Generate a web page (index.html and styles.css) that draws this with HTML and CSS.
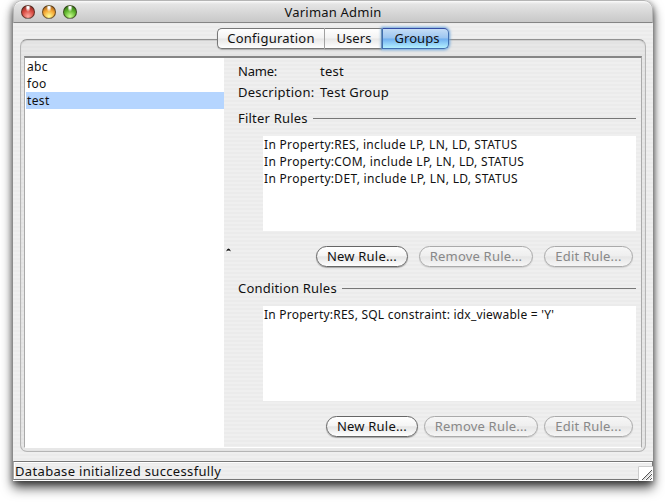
FILE: index.html
```html
<!DOCTYPE html>
<html lang="en">
<head>
<meta charset="utf-8">
<title>Variman Admin</title>
<link rel="stylesheet" href="styles.css">
</head>
<body>
<main class="window">
  <header class="titlebar">
    <div class="lights"><i class="light red"></i><i class="light yellow"></i><i class="light green"></i></div>
    <h1 class="title">Variman Admin</h1>
  </header>
  <section class="content">
    <nav class="tabs">
      <button class="tab tab-config">Configuration</button>
      <button class="tab tab-users">Users</button>
      <button class="tab tab-groups active">Groups</button>
    </nav>
    <div class="panel">
      <div class="split">
        <ul class="groups">
          <li>abc</li>
          <li>foo</li>
          <li class="selected">test</li>
        </ul>
        <div class="divider"><svg width="6" height="5" viewBox="0 0 6 5"><path d="M0 3.5 Q2.5 -2.5 5 3.5 Q2.5 1.5 0 3.5Z" fill="#111"/><path d="M1 4 Q2.5 2 4 4Z" fill="#fff"/></svg></div>
        <div class="details">
          <div class="field name"><span class="label">Name:</span><span class="value">test</span></div>
          <div class="field desc"><span class="label">Description:</span><span class="value">Test Group</span></div>
          <div class="heading filter"><span>Filter Rules</span><hr></div>
          <ul class="rules filters">
            <li>In Property:RES, include LP, LN, LD, STATUS</li>
            <li>In Property:COM, include LP, LN, LD, STATUS</li>
            <li>In Property:DET, include LP, LN, LD, STATUS</li>
          </ul>
          <div class="buttons wide">
            <button class="btn new">New Rule...</button>
            <button class="btn remove" disabled>Remove Rule...</button>
            <button class="btn edit" disabled>Edit Rule...</button>
          </div>
          <div class="heading condition"><span>Condition Rules</span><hr></div>
          <ul class="rules">
            <li>In Property:RES, SQL constraint: idx_viewable = 'Y'</li>
          </ul>
          <div class="buttons">
            <button class="btn new">New Rule...</button>
            <button class="btn remove" disabled>Remove Rule...</button>
            <button class="btn edit" disabled>Edit Rule...</button>
          </div>
        </div>
      </div>
    </div>
  </section>
  <footer class="status">
    <span class="status-text">Database initialized successfully</span>
    <svg class="grip" width="15" height="15" viewBox="0 0 15 15"><path d="M0 0H15V15H0Z" fill="#fff"/><path d="M.5 15V.5H15" fill="none" stroke="#ccc"/><path d="M4 14L14 4M8 14L14 8M12 14L14 12" stroke="#555" fill="none"/><path d="M5.5 14L14 5.5M9.5 14L14 9.5" stroke="#bbb" fill="none"/></svg>
  </footer>
</main>
</body>
</html>
```
FILE: styles.css
```css
* { box-sizing: border-box; }
body {
  margin: 0;
  height: 502px;
  overflow: hidden;
  background: #fff;
  color: #111;
  font: 13px/17px "Noto Sans", "Open Sans", sans-serif;
  letter-spacing: .25px;
}
ul { list-style: none; margin: 0; padding: 0; }
button { font: inherit; letter-spacing: inherit; color: inherit; padding: 0; white-space: nowrap; }
span, li { white-space: nowrap; }
.window {
  width: 640px;
  height: 481px;
  margin-left: 13px;
  display: flex;
  flex-direction: column;
  border-radius: 9px 9px 0 0;
  background: repeating-linear-gradient(#efefef 0 2px, #ebebeb 2px 4px);
  box-shadow: 0 7px 12px rgba(0,0,0,.65), 0 2px 6px rgba(0,0,0,.5);
}
.titlebar {
  position: relative;
  height: 23px;
  flex: none;
  border: 1px solid #b5b5b5;
  border-bottom-color: #858585;
  border-radius: 9px 9px 0 0;
  background: linear-gradient(#fafafa, #e4e4e4 15%, #c8c8c8);
  box-shadow: inset 0 1px #f8f8f8;
}
.lights { display: flex; gap: 7px; padding: 4px 0 0 7px; }
.light {
  width: 14px;
  height: 14px;
  border-radius: 50%;
  border: 1px solid rgba(45,35,25,.65);
}
.red { background: radial-gradient(ellipse at 50% 8%, #fff 0 10%, transparent 32%), radial-gradient(circle at 50% 85%, #ffaaa1, #d84b42 50%, #782019); }
.yellow { background: radial-gradient(ellipse at 50% 8%, #fff 0 10%, transparent 32%), radial-gradient(circle at 50% 85%, #ffff96, #f5a735 50%, #8a4a10); }
.green { background: radial-gradient(ellipse at 50% 8%, #fff 0 10%, transparent 32%), radial-gradient(circle at 50% 85%, #c8ff8e, #60b52d 50%, #225b0b); }
.title {
  position: absolute;
  inset: 3px 0 auto;
  margin: 0;
  font-size: 13px;
  font-weight: 400;
  line-height: 17px;
  text-align: center;
  letter-spacing: .2px;
}
.content { flex: 1; padding: 5px 7px 9px; display: flex; flex-direction: column; }
.tabs { display: flex; height: 21px; margin-left: 197px; position: relative; z-index: 1; }
.tab {
  border: 1px solid #777;
  border-left-width: 0;
  background: linear-gradient(#fff, #f3f3f3 48%, #e7e7e7 52%, #fff);
  box-shadow: 0 1px 1px rgba(0,0,0,.25);
  line-height: 19px;
}
.tab-config { width: 108px; border-left-width: 1px; border-right-color: #aaa; border-radius: 5px 0 0 5px; }
.tab-users { width: 57px; padding-left: 2px; letter-spacing: .1px; }
.tab-groups { width: 67px; padding-left: 3px; border-radius: 0 5px 5px 0; letter-spacing: .05px; }
.active {
  border: 1px solid #416fb0;
  border-top-color: #334ca5;
  background: linear-gradient(#c4ddf6, #9bc5f0 48%, #70aff0 52%, #b4f1ff);
  box-shadow: 0 0 3px 1px #69a4dc;
}
.panel {
  width: 626px;
  height: 413px;
  margin-top: -10px;
  padding: 16px 3px 3px;
  border: 1px solid #b5b5b5;
  border-top-color: #929292;
  border-radius: 7px;
  background: repeating-linear-gradient(#e7e7e7 0 2px, #e3e3e3 2px 4px);
  box-shadow: inset 0 1px 1px #ccc;
}
.split {
  height: 392px;
  display: flex;
  border: solid #aaa;
  border-width: 2px 1px 1px;
  border-top-color: #858585;
  border-bottom-color: #fff;
  background: repeating-linear-gradient(#efefef 0 2px, #ebebeb 2px 4px);
}
.groups { width: 199px; height: 389px; padding-left: 1px; background: #fff; font-size: 12px; letter-spacing: .35px; }
.groups li { height: 17px; padding-left: 1px; }
.groups .selected { background: #b5d5ff; }
.divider { width: 14px; padding: 190px 0 0 2px; }
.divider svg { display: block; }
.details { width: 398px; padding-top: 5px; }
.field { display: flex; height: 17px; }
.label { width: 82px; }
.name .label { letter-spacing: -.2px; }
.desc { margin-top: 4px; }
.heading { display: flex; align-items: center; height: 17px; letter-spacing: .2px; }
.heading hr { flex: 1; height: 1px; margin: 0 0 0 5px; border: 0; background: #777; }
.filter { margin-top: 9px; }
.condition { margin-top: 13px; }
.rules {
  height: 95px;
  margin: 9px 0 0 25px;
  padding: 0 1px;
  background: #fff;
  font-size: 12px;
  letter-spacing: .22px;
}
.filters { letter-spacing: .31px; }
.rules li { height: 17px; }
.buttons { display: flex; justify-content: flex-end; gap: 6px; margin: 15px 3px 0 0; }
.wide { gap: 11px; }
.btn {
  height: 21px;
  border: 1px solid #666;
  border-radius: 11px;
  background: linear-gradient(#fff, #f5f5f5 45%, #e5e5e5 52%, #fff);
  box-shadow: 0 1px 1px rgba(0,0,0,.3);
  line-height: 19px;
  letter-spacing: .2px;
}
.new { width: 92px; }
.remove { width: 114px; }
.edit { width: 89px; }
.btn:disabled { border-color: #aaa; color: #888; background: linear-gradient(#f6f6f6, #efefef 45%, #e6e6e6 52%, #f6f6f6); box-shadow: 0 1px 1px rgba(0,0,0,.12); }
.status {
  position: relative;
  height: 19px;
  flex: none;
  margin-bottom: 1px;
  padding: 1px 0 0 1px;
  border: 1px solid #777;
  border-left-color: #aaa;
  box-shadow: inset 1px 1px #fff, 0 1px #fff;
}
.status-text { display: block; letter-spacing: .34px; }
.grip { position: absolute; right: -1px; bottom: -2px; }
```
